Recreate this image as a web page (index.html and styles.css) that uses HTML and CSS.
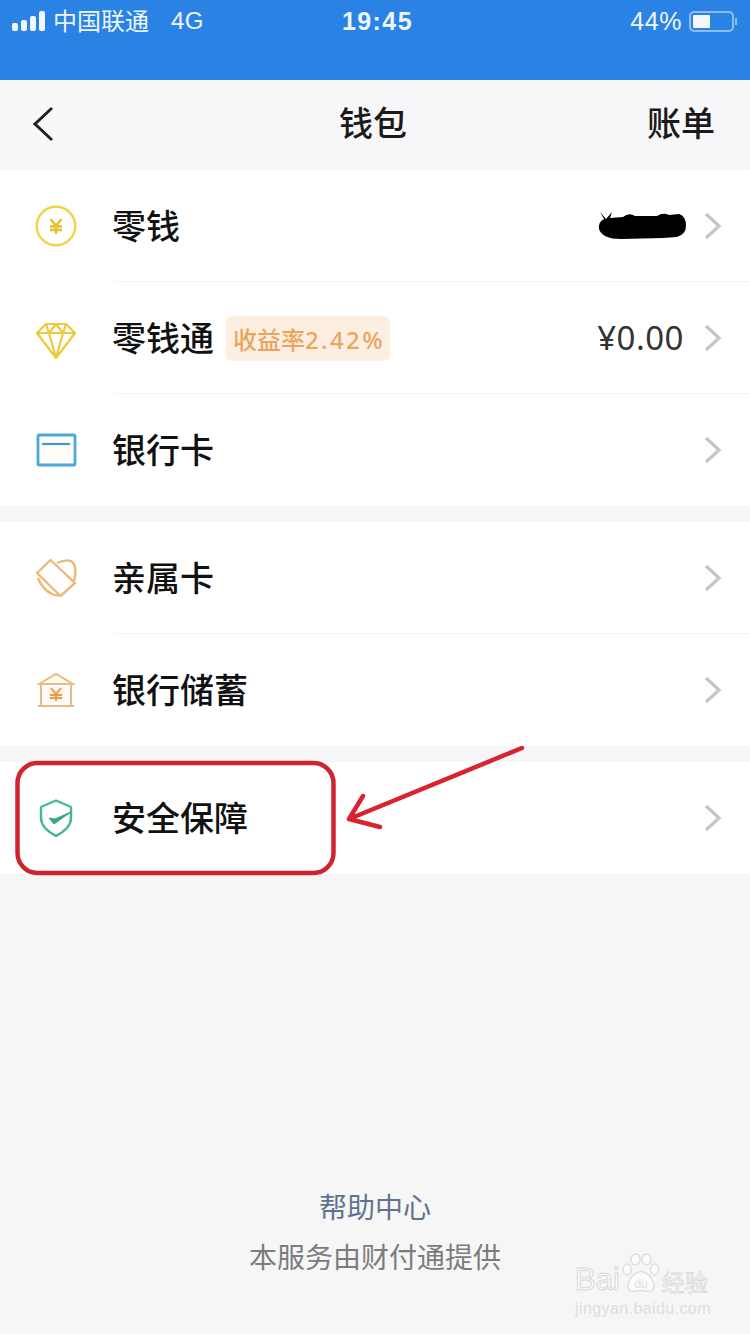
FILE: index.html
```html
<!DOCTYPE html>
<html lang="zh-CN">
<head>
<meta charset="utf-8">
<title>钱包</title>
<link rel="stylesheet" href="styles.css">
</head>
<body>
<div class="page">
  <header class="status">
    <div class="status-left">
      <span class="signal"><i class="b1"></i><i class="b2"></i><i class="b3"></i><i class="b4"></i></span>
      <span class="carrier">中国联通</span>
      <span class="net">4G</span>
    </div>
    <div class="status-time">19:45</div>
    <div class="status-right">
      <span class="pct">44%</span>
      <span class="battery"><i class="level"></i></span><i class="nub"></i>
    </div>
  </header>
  <nav class="nav">
    <svg class="back" width="24" height="36" viewBox="0 0 24 36"><path d="M21 2 L4 18 L21 34" fill="none" stroke="#222" stroke-width="3"/></svg>
    <div class="nav-title">钱包</div>
    <div class="nav-action">账单</div>
  </nav>
  <section class="group">
    <div class="row">
      <span class="icon"><svg width="42" height="42" viewBox="0 0 42 42"><circle cx="21" cy="21" r="19.2" fill="none" stroke="#f0d448" stroke-width="2.4"/><path d="M15.5 14 L21 21 L26.5 14 M21 21 V29 M15 21.5 H27 M15 25 H27" fill="none" stroke="#e8bf2c" stroke-width="2.4"/></svg></span>
      <span class="label">零钱</span>
      <span class="value"><svg class="scribble" width="90" height="30" viewBox="0 0 90 30"><path d="M3 1 L9 8 L15 1 L13 7 L26 6 Q32 1 38 5 L60 5 Q66 1 72 4 L82 3 Q89 5 89 15 Q89 23 80 26 L66 27 L24 28 Q5 28 2 18 Q1 11 7 8 Z" fill="#000"/></svg></span>
      <svg class="chev" width="18" height="28" viewBox="0 0 18 28"><path d="M2 2 L15 14 L2 26" fill="none" stroke="#c6c6c8" stroke-width="3.4"/></svg>
    </div>
    <div class="row">
      <span class="icon"><svg width="42" height="44" viewBox="0 0 42 44"><path d="M11 8 H31 L40 17 L21 42 L2 17 Z M2 17 H40 M11 8 L14 17 L21 42 L28 17 L31 8 M14 17 L21 8 L28 17" fill="none" stroke="#eccb3a" stroke-width="2.2" stroke-linejoin="round"/></svg></span>
      <span class="label">零钱通</span>
      <span class="badge">收益率<span class="rate">2.42%</span></span>
      <span class="value">¥0.00</span>
      <svg class="chev" width="18" height="28" viewBox="0 0 18 28"><path d="M2 2 L15 14 L2 26" fill="none" stroke="#c6c6c8" stroke-width="3.4"/></svg>
    </div>
    <div class="row">
      <span class="icon"><svg width="42" height="34" viewBox="0 0 42 34"><rect x="3" y="2" width="37" height="30" rx="1.5" fill="#fffef6" stroke="#4aa8dc" stroke-width="2.8"/><path d="M7 11 H35" stroke="#4a94cc" stroke-width="2.2"/></svg></span>
      <span class="label">银行卡</span>
      <span class="value"></span>
      <svg class="chev" width="18" height="28" viewBox="0 0 18 28"><path d="M2 2 L15 14 L2 26" fill="none" stroke="#c6c6c8" stroke-width="3.4"/></svg>
    </div>
  </section>
  <section class="group">
    <div class="row">
      <span class="icon"><svg width="42" height="40" viewBox="0 0 42 40"><path d="M15.5 2 L40 25 L25.5 38 L2 15 Z" fill="none" stroke="#ecb877" stroke-width="2.4" stroke-linejoin="round"/><path d="M22 5 Q31 1 36 3 Q43 8 39 23 M3 20 Q8 32 17 36 Q21 38 24 37" fill="none" stroke="#ecb877" stroke-width="2.4"/></svg></span>
      <span class="label">亲属卡</span>
      <span class="value"></span>
      <svg class="chev" width="18" height="28" viewBox="0 0 18 28"><path d="M2 2 L15 14 L2 26" fill="none" stroke="#c6c6c8" stroke-width="3.4"/></svg>
    </div>
    <div class="row">
      <span class="icon"><svg width="38" height="36" viewBox="0 0 38 36"><path d="M2 12 L19 2 L36 12 Z" fill="#fdf8f0" stroke="#e8bb80" stroke-width="2"/><path d="M4 12 V34 M34 12 V34 M1 34 H37" fill="none" stroke="#e8bb80" stroke-width="2"/><rect x="10" y="15" width="18" height="15" fill="#fdf3e6"/><path d="M14 16 L19 22 L24 16 M19 22 V29 M13 23 H25 M13 26 H25" fill="none" stroke="#e49c48" stroke-width="1.9"/></svg></span>
      <span class="label">银行储蓄</span>
      <span class="value"></span>
      <svg class="chev" width="18" height="28" viewBox="0 0 18 28"><path d="M2 2 L15 14 L2 26" fill="none" stroke="#c6c6c8" stroke-width="3.4"/></svg>
    </div>
  </section>
  <section class="group">
    <div class="row">
      <span class="icon"><svg width="34" height="38" viewBox="0 0 34 38"><path d="M17 1.5 L32 8 V19 Q32 29 17 37 Q2 29 2 19 V8 Z" fill="none" stroke="#45b98c" stroke-width="2.4" stroke-linejoin="round"/><path d="M10 19 L15 25 L32 13 L16 20 Z" fill="#36a87c" stroke="#36a87c" stroke-width="1" stroke-linejoin="round"/></svg></span>
      <span class="label">安全保障</span>
      <span class="value"></span>
      <svg class="chev" width="18" height="28" viewBox="0 0 18 28"><path d="M2 2 L15 14 L2 26" fill="none" stroke="#c6c6c8" stroke-width="3.4"/></svg>
    </div>
  </section>
  <footer class="foot">
    <div class="help">帮助中心</div>
    <div class="provider">本服务由财付通提供</div>
  </footer>

  <svg class="markup" width="750" height="1334" viewBox="0 0 750 1334">
    <rect x="17.5" y="763" width="316" height="110" rx="20" fill="none" stroke="#cf2430" stroke-width="4.5"/>
    <path d="M522 748 L349 819 M363 796 L349 819 L380 827" fill="none" stroke="#d9232f" stroke-width="4.5" stroke-linecap="round" stroke-linejoin="round"/>
  </svg>

  <div class="watermark">
    <div class="wm-top"><span class="wm-bai">Bai</span><svg class="paw" width="38" height="42" viewBox="0 0 40 46"><g fill="#fbfbfc" stroke="#dedee0" stroke-width="1.6"><ellipse cx="5" cy="18" rx="4.5" ry="6"/><ellipse cx="14" cy="7" rx="5" ry="6"/><ellipse cx="26" cy="7" rx="5" ry="6"/><ellipse cx="35" cy="18" rx="4.5" ry="6"/><path d="M20 20 Q30 22 34 33 Q36 43 27 42 Q20 40 13 42 Q4 43 6 33 Q10 22 20 20 Z"/></g><text x="20" y="38" text-anchor="middle" font-size="13" fill="#dedee0" font-family="Liberation Sans">du</text></svg><span class="wm-jy">经验</span></div>
    <div class="wm-url">jingyan.baidu.com</div>
  </div>
</div>
</body>
</html>
```
FILE: styles.css
```css
* { box-sizing: border-box; }
html, body { margin: 0; padding: 0; }
body {
  width: 750px;
  height: 1334px;
  overflow: hidden;
  font-family: "Noto Sans CJK SC", "Noto Sans", sans-serif;
}
.page {
  position: relative;
  width: 750px;
  height: 1334px;
  background: #f6f6f7;
  display: flex;
  flex-direction: column;
}
.status {
  height: 80px;
  flex: none;
  background: #2a82e4;
  color: #eef5fd;
  display: grid;
  grid-template-columns: 1fr auto 1fr;
  padding: 0 13px 38px 12px;
  align-items: center;
}
.status-left { display: flex; align-items: center; }
.signal { display: flex; align-items: flex-end; gap: 3px; height: 20px; margin-right: 8px; }
.signal i { width: 6px; background: #f2f7fd; border-radius: 2px; display: block; }
.b1 { height: 8px; } .b2 { height: 11px; } .b3 { height: 15px; } .b4 { height: 20px; }
.carrier { font-size: 24px; line-height: 28px; padding-bottom: 3px; }
.net { margin-left: 22px; font-family: "Liberation Sans", sans-serif; font-size: 24px; letter-spacing: .5px; }
.status-time { font-family: "Liberation Sans", sans-serif; font-weight: 700; font-size: 25px; letter-spacing: 1.4px; transform: translateX(3px); }
.status-right { display: flex; justify-content: flex-end; align-items: center; }
.pct { font-family: "Liberation Sans", sans-serif; font-size: 25px; letter-spacing: .6px; margin-right: 7px; }
.battery { width: 45px; height: 21px; border: 2px solid #8fbcef; border-radius: 5px; padding: 2px; display: block; }
.level { display: block; width: 17px; height: 13px; background: #f4f8fd; border-radius: 1px; }
.nub { width: 2px; height: 7px; margin-left: 1px; background: #8fbcef; display: block; }

.nav {
  height: 90px;
  flex: none;
  background: #f7f7f9;
  display: grid;
  grid-template-columns: 1fr auto 1fr;
  align-items: center;
  padding: 0 35px 2px 31px;
}
.back { display: block; }
.nav-title { font-size: 34px; line-height: 44px; padding-bottom: 4px; color: #1a1a1a; font-weight: 500; }
.nav-action { font-size: 34px; line-height: 44px; padding-bottom: 4px; color: #1a1a1a; text-align: right; font-weight: 500; }

.group { background: #fff; margin-bottom: 16px; flex: none; }
.row {
  height: 112px;
  display: flex;
  align-items: center;
  padding: 0 30px 0 0;
  position: relative;
  background: #fff;
}
.row + .row::before {
  content: "";
  position: absolute;
  top: -1px;
  left: 113px;
  right: 0;
  height: 1px;
  background: #f5f5f5;
}
.icon { width: 113px; flex: none; display: flex; justify-content: center; padding-right: 2px; }
.icon svg { display: block; }
.label { font-size: 34px; line-height: 44px; padding-bottom: 3px; margin-left: -1px; color: #111; font-weight: 500; }
.badge {
  margin-left: 12px;
  height: 45px;
  width: 164px;
  border-radius: 6px;
  background: #fcefe2;
  color: #e9a55e;
  font-size: 24px;
  line-height: 45px;
  text-align: center;
  font-weight: 500;
  white-space: nowrap;
}
.rate { font-family: "Noto Sans", sans-serif; font-size: 24px; letter-spacing: 2.4px; margin-right: -2px; }
.value {
  margin-left: auto;
  font-family: "Noto Sans", sans-serif;
  font-size: 33px;
  line-height: 44px;
  letter-spacing: .5px;
  color: #333;
  margin-right: 20px;
}
.scribble { display: block; margin-right: -3px; }
.chev { display: block; flex: none; margin-right: -2px; }

.foot {
  margin-top: auto;
  height: 153px;
  text-align: center;
  font-size: 28px;
  line-height: 50px;
  flex: none;
}
.help { color: #5f7391; }
.provider { color: #7c7c7e; }

.markup { position: absolute; left: 0; top: 0; pointer-events: none; }

.watermark {
  position: absolute;
  left: 575px;
  top: 1253px;
  width: 136px;
  color: #dedee0;
  text-align: center;
}
.wm-top { display: flex; align-items: flex-end; height: 42px; }
.wm-bai {
  font-family: "Liberation Sans", sans-serif;
  font-size: 31px;
  line-height: 30px;
  color: #fbfbfc;
  -webkit-text-stroke: 1px #d8d8da;
  margin-right: 2px;
}
.paw { flex: none; }
.wm-jy {
  font-size: 23px;
  line-height: 28px;
  margin-left: 2px;
  white-space: nowrap;
  color: #fbfbfc;
  -webkit-text-stroke: .8px #d8d8da;
}
.wm-url { font-family: "Liberation Sans", sans-serif; font-size: 16px; line-height: 22px; margin-top: 3px; letter-spacing: .4px; white-space: nowrap; }
```
